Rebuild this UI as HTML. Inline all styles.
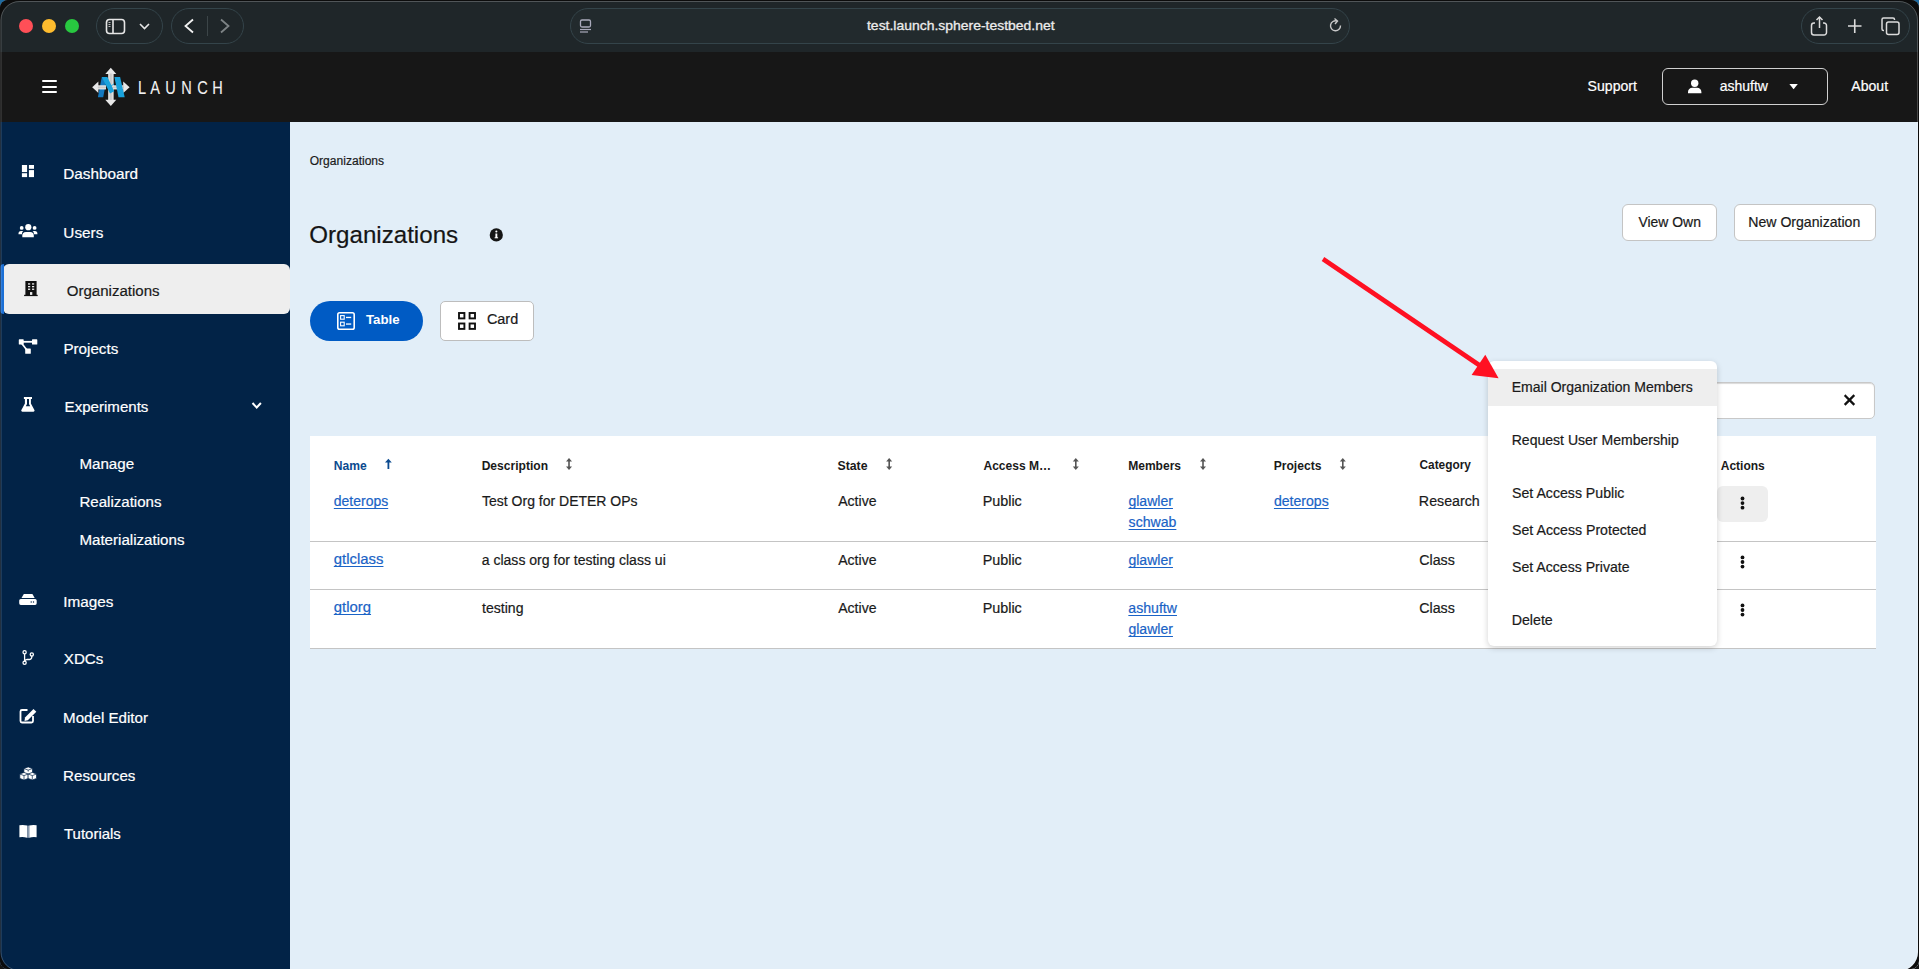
<!DOCTYPE html><html><head><meta charset="utf-8"><style>
*{box-sizing:border-box;margin:0;padding:0}
html,body{width:1919px;height:969px;overflow:hidden;background:linear-gradient(#1d6aa0 0,#1d6aa0 20px,#151515 20px);font-family:"Liberation Sans",sans-serif}
.t{position:absolute;line-height:1;white-space:nowrap;-webkit-text-stroke:0.2px currentColor}
.b{-webkit-text-stroke:0}
.a{position:absolute}
svg{position:absolute;left:0;top:0;overflow:visible}
#win{position:absolute;left:0;top:0;width:1919px;height:969px;border-radius:8px;overflow:hidden;background:#e2eef8}
</style></head><body><div id="win">
<div class="a" style="left:0;top:0;width:1919px;height:52px;background:#1f2629"></div>
<div class="a" style="left:19px;top:19px;width:14px;height:14px;border-radius:50%;background:#ff4f57"></div>
<div class="a" style="left:42px;top:19px;width:14px;height:14px;border-radius:50%;background:#febc2e"></div>
<div class="a" style="left:65px;top:19px;width:14px;height:14px;border-radius:50%;background:#28c840"></div>
<div class="a" style="left:96px;top:8px;width:67px;height:36px;border-radius:18px;border:1px solid #34444a"></div>
<div class="a" style="left:171px;top:8px;width:73px;height:36px;border-radius:18px;border:1px solid #34444a"></div>
<div class="a" style="left:570px;top:8px;width:780px;height:36px;border-radius:18px;border:1px solid #34444a;background:#222a2d"></div>
<div class="a" style="left:1801px;top:8px;width:109px;height:36px;border-radius:18px;border:1px solid #34444a"></div>
<svg width="1919" height="52"><rect x="106.5" y="19.5" width="18" height="14" rx="3" fill="none" stroke="#e6e6e6" stroke-width="1.6"/><line x1="113" y1="19.5" x2="113" y2="33.5" stroke="#e6e6e6" stroke-width="1.6"/><line x1="108.5" y1="22.5" x2="110.5" y2="22.5" stroke="#bbb" stroke-width="1"/><line x1="108.5" y1="24.5" x2="110.5" y2="24.5" stroke="#bbb" stroke-width="1"/><line x1="108.5" y1="26.5" x2="110.5" y2="26.5" stroke="#bbb" stroke-width="1"/><polyline points="140,24 144.5,28.5 149,24" fill="none" stroke="#e6e6e6" stroke-width="1.6"/><polyline points="193,19.5 185.5,26 193,32.5" fill="none" stroke="#f0f0f0" stroke-width="1.8"/><line x1="207.5" y1="16" x2="207.5" y2="36" stroke="#3c4548" stroke-width="1"/><polyline points="221,19.5 228.5,26 221,32.5" fill="none" stroke="#7d8385" stroke-width="1.8"/><rect x="580.5" y="20" width="10" height="7" rx="1.5" fill="none" stroke="#aab" stroke-width="1.3"/><line x1="580" y1="29.5" x2="591" y2="29.5" stroke="#aab" stroke-width="1.2"/><line x1="580" y1="32" x2="588" y2="32" stroke="#aab" stroke-width="1.2"/><path d="M1340.5 25.5 A5 5 0 1 1 1337 21" fill="none" stroke="#c8c8c8" stroke-width="1.4"/><polyline points="1334.5,18.5 1337.5,21 1335,24" fill="none" stroke="#c8c8c8" stroke-width="1.4"/><path d="M1815 23 h-1 a2.5 2.5 0 0 0 -2.5 2.5 v7 a2.5 2.5 0 0 0 2.5 2.5 h10 a2.5 2.5 0 0 0 2.5 -2.5 v-7 a2.5 2.5 0 0 0 -2.5 -2.5 h-1" fill="none" stroke="#dcdcdc" stroke-width="1.5"/><line x1="1819.5" y1="17" x2="1819.5" y2="28" stroke="#dcdcdc" stroke-width="1.5"/><polyline points="1816.5,20 1819.5,17 1822.5,20" fill="none" stroke="#dcdcdc" stroke-width="1.5"/><line x1="1848" y1="26" x2="1861.5" y2="26" stroke="#dcdcdc" stroke-width="1.6"/><line x1="1854.75" y1="19.2" x2="1854.75" y2="33" stroke="#dcdcdc" stroke-width="1.6"/><path d="M1884 30.5 h-0.5 a1.5 1.5 0 0 1 -1.5 -1.5 v-9.5 a1.5 1.5 0 0 1 1.5 -1.5 h9.5 a1.5 1.5 0 0 1 1.5 1.5 v0.5" fill="none" stroke="#dcdcdc" stroke-width="1.5"/><rect x="1886.5" y="22" width="12.5" height="12.5" rx="2" fill="none" stroke="#dcdcdc" stroke-width="1.5"/></svg>
<div class="t" style="left:866.82px;top:19.44px;font-size:13.30px;color:#ececec;font-weight:400;-webkit-text-stroke:0.3px #ececec;transform:scaleX(1.0486);transform-origin:0 0;">test.launch.sphere-testbed.net</div>
<div class="a" style="left:0;top:52px;width:1919px;height:70px;background:#171717"></div>
<div class="a" style="left:42px;top:80px;width:15px;height:2px;background:#fff;border-radius:1px"></div>
<div class="a" style="left:42px;top:85.5px;width:15px;height:2px;background:#fff;border-radius:1px"></div>
<div class="a" style="left:42px;top:91px;width:15px;height:2px;background:#fff;border-radius:1px"></div>
<svg width="300" height="122"><defs><linearGradient id="gs" x1="0" y1="0" x2="0" y2="1"><stop offset="0" stop-color="#f0f0f0"/><stop offset="0.5" stop-color="#c8c8c8"/><stop offset="1" stop-color="#f0f0f0"/></linearGradient><linearGradient id="gv" x1="0" y1="0" x2="1" y2="0"><stop offset="0" stop-color="#f0f0f0"/><stop offset="0.5" stop-color="#c4c4c4"/><stop offset="1" stop-color="#f0f0f0"/></linearGradient></defs><g fill="#e8e8e8"><polygon points="110.8,67.7 116.3,74 105.3,74"/><polygon points="110.8,105.9 116.3,99.7 105.3,99.7"/><polygon points="92.2,87.3 98.4,81.5 98.4,93"/><polygon points="129.6,87.3 123.2,81.5 123.2,93"/></g><rect x="108.2" y="73.5" width="5.4" height="26.5" fill="url(#gv)"/><rect x="110" y="85.3" width="13.5" height="4.1" fill="url(#gs)"/><polygon points="114.4,77 120.1,77 124.7,97.2 118.5,97.2" fill="#19a2dc"/><polygon points="97.9,97.2 103.2,97.2 107,77 101.8,77" fill="#1479c0"/><polygon points="101.8,77 107.4,77 114.2,91.2 110,93.5" fill="#19a2dc"/><rect x="97.8" y="85.3" width="8.2" height="4.1" fill="url(#gs)"/><line x1="111" y1="86" x2="114" y2="84" stroke="#19a2dc" stroke-width="0.9"/></svg>
<div class="t" style="left:136.94px;top:78.59px;font-size:18.20px;color:#f2f2f2;font-weight:400;-webkit-text-stroke:0.1px #f2f2f2;transform:scaleX(0.8);transform-origin:50% 50%;">L</div>
<div class="t" style="left:149.39px;top:78.59px;font-size:18.20px;color:#f2f2f2;font-weight:400;-webkit-text-stroke:0.1px #f2f2f2;transform:scaleX(0.8);transform-origin:50% 50%;">A</div>
<div class="t" style="left:164.40px;top:78.59px;font-size:18.20px;color:#f2f2f2;font-weight:400;-webkit-text-stroke:0.1px #f2f2f2;transform:scaleX(0.8);transform-origin:50% 50%;">U</div>
<div class="t" style="left:180.00px;top:78.59px;font-size:18.20px;color:#f2f2f2;font-weight:400;-webkit-text-stroke:0.1px #f2f2f2;transform:scaleX(0.8);transform-origin:50% 50%;">N</div>
<div class="t" style="left:195.61px;top:78.59px;font-size:18.20px;color:#f2f2f2;font-weight:400;-webkit-text-stroke:0.1px #f2f2f2;transform:scaleX(0.8);transform-origin:50% 50%;">C</div>
<div class="t" style="left:211.00px;top:78.59px;font-size:18.20px;color:#f2f2f2;font-weight:400;-webkit-text-stroke:0.1px #f2f2f2;transform:scaleX(0.8);transform-origin:50% 50%;">H</div>
<div class="t" style="left:1587.60px;top:78.88px;font-size:14.09px;color:#fff;font-weight:400;">Support</div>
<div class="a" style="left:1661.5px;top:68px;width:166px;height:37px;border-radius:6px;border:1px solid #d0d0d0"></div>
<svg width="1919" height="122"><circle cx="1694.7" cy="83.2" r="3.7" fill="#fff"/><path d="M1688 93.3 v-1.3 a4.2 4.2 0 0 1 4.2 -4.2 h5 a4.2 4.2 0 0 1 4.2 4.2 v1.3 z" fill="#fff"/><polygon points="1789.4,84 1797.8,84 1793.6,89.3" fill="#fff"/></svg>
<div class="t" style="left:1719.74px;top:78.96px;font-size:13.99px;color:#fff;font-weight:400;">ashuftw</div>
<div class="t" style="left:1851.30px;top:78.86px;font-size:14.10px;color:#fff;font-weight:400;">About</div>
<div class="a" style="left:0;top:122px;width:290px;height:847px;background:#022347"></div>
<div class="a" style="left:3px;top:264px;width:287px;height:50px;border-radius:6px;background:#eeeeee"></div>
<div class="a" style="left:0px;top:264px;width:4px;height:50px;border-radius:6px 0 0 6px;background:#1a6fd6"></div>
<div class="t" style="left:63.28px;top:166.24px;font-size:15.31px;color:#fff;font-weight:400;">Dashboard</div>
<div class="t" style="left:63.37px;top:225.13px;font-size:15.32px;color:#fff;font-weight:400;">Users</div>
<div class="t" style="left:66.75px;top:283.16px;font-size:15.05px;color:#1a1a1a;font-weight:400;">Organizations</div>
<div class="t" style="left:63.38px;top:340.83px;font-size:15.20px;color:#fff;font-weight:400;">Projects</div>
<div class="t" style="left:64.59px;top:399.02px;font-size:15.09px;color:#fff;font-weight:400;">Experiments</div>
<div class="t" style="left:79.39px;top:456.17px;font-size:15.16px;color:#fff;font-weight:400;">Manage</div>
<div class="t" style="left:79.39px;top:494.13px;font-size:15.08px;color:#fff;font-weight:400;">Realizations</div>
<div class="t" style="left:79.39px;top:531.98px;font-size:15.14px;color:#fff;font-weight:400;">Materializations</div>
<div class="t" style="left:63.22px;top:594.05px;font-size:15.30px;color:#fff;font-weight:400;">Images</div>
<div class="t" style="left:63.85px;top:651.49px;font-size:15.14px;color:#fff;font-weight:400;">XDCs</div>
<div class="t" style="left:63.09px;top:710.00px;font-size:15.13px;color:#fff;font-weight:400;">Model Editor</div>
<div class="t" style="left:63.09px;top:768.09px;font-size:15.13px;color:#fff;font-weight:400;">Resources</div>
<div class="t" style="left:64.00px;top:826.83px;font-size:14.97px;color:#fff;font-weight:400;">Tutorials</div>
<svg width="290" height="969"><g fill="#fff"><rect x="21.9" y="165" width="5.2" height="7.1"/><rect x="21.9" y="173.2" width="5.2" height="3.9"/><rect x="28.9" y="165" width="5.1" height="3.8"/><rect x="28.9" y="170.1" width="5.1" height="7"/></g><g fill="#fff"><circle cx="28.3" cy="227.2" r="3.1"/><circle cx="21.7" cy="227.9" r="1.9"/><circle cx="34.6" cy="227.9" r="1.9"/><path d="M22.3 237.3 v-1.8 a3.6 3.6 0 0 1 3.6 -3.6 h4.3 a3.6 3.6 0 0 1 3.6 3.6 v1.8 z"/><path d="M18.5 234.2 v-0.8 a2.5 2.5 0 0 1 2.5 -2.5 h2.3 a3 3 0 0 0 -1.3 2.5 v0.8 z"/><path d="M37.4 234.2 v-0.8 a2.5 2.5 0 0 0 -2.5 -2.5 h-2.3 a3 3 0 0 1 1.3 2.5 v0.8 z"/></g><g fill="#111"><rect x="25.4" y="281" width="11.2" height="14.2"/><rect x="24.1" y="294.8" width="13.6" height="1.3"/></g><g fill="#eee"><rect x="28" y="283.3" width="2.2" height="1.3"/><rect x="32" y="283.3" width="2.2" height="1.3"/><rect x="28" y="286" width="2.2" height="1.3"/><rect x="32" y="286" width="2.2" height="1.3"/><rect x="28" y="288.6" width="2.2" height="1.3"/><rect x="32" y="288.6" width="2.2" height="1.3"/><rect x="30" y="292.1" width="2.3" height="2.8"/></g><g fill="#fff"><rect x="18.8" y="339.3" width="4.9" height="5.2" rx="0.6"/><rect x="32" y="339.3" width="5.3" height="5.2" rx="0.6"/><rect x="25.2" y="348.5" width="5.6" height="5.3" rx="0.6"/><rect x="23" y="340.9" width="9.5" height="1.8"/></g><line x1="21.8" y1="343.5" x2="26.5" y2="349.5" stroke="#fff" stroke-width="1.7"/><path d="M23.9 397 h8.1 v2 h-1.1 v4.6 l3.5 6.3 a1.2 1.2 0 0 1 -1 1.8 h-11 a1.2 1.2 0 0 1 -1 -1.8 l3.5 -6.3 v-4.6 h-1 z M27 399 v5 l-1.2 2.2 h4.4 l-1.2 -2.2 v-5 z" fill="#fff" fill-rule="evenodd"/><path d="M21.5 598 l2.3 -4 h8.6 l2.3 4 z" fill="#fff"/><path d="M19.2 600.5 a1.6 1.6 0 0 1 1.6 -1.6 h14.3 a1.6 1.6 0 0 1 1.6 1.6 v2.8 a1.6 1.6 0 0 1 -1.6 1.6 h-14.3 a1.6 1.6 0 0 1 -1.6 -1.6 z" fill="#fff"/><circle cx="31.2" cy="602" r="0.7" fill="#022347"/><circle cx="33.5" cy="602" r="0.7" fill="#022347"/><g fill="none" stroke="#fff" stroke-width="1.3"><circle cx="24.6" cy="652.3" r="1.6"/><circle cx="24.6" cy="662.7" r="1.6"/><circle cx="31.8" cy="654.4" r="1.6"/><line x1="24.6" y1="653.9" x2="24.6" y2="661.1"/><path d="M31.8 656 v1 a2.5 2.5 0 0 1 -2.5 2.5 h-2.2 a2.5 2.5 0 0 0 -2.5 2"/></g><path d="M27.5 710 h-5.5 a1.5 1.5 0 0 0 -1.5 1.5 v9.5 a1.5 1.5 0 0 0 1.5 1.5 h9.5 a1.5 1.5 0 0 0 1.5 -1.5 v-5" fill="none" stroke="#fff" stroke-width="1.8"/><path d="M25 717.5 l8.5 -8.5 l2.8 2.8 l-8.5 8.5 l-3.3 0.6 z" fill="#fff"/><g fill="#fff" stroke="#022347" stroke-width="0.7" stroke-linejoin="round"><path d="M28.2 766.9 l4.3 1.6 v4.4 l-4.3 1.6 l-4.3 -1.6 v-4.4 z"/><path d="M24 772.4 l4.2 1.6 v4.4 l-4.2 1.6 l-4.2 -1.6 v-4.4 z"/><path d="M32.3 772.4 l4.2 1.6 v4.4 l-4.2 1.6 l-4.2 -1.6 v-4.4 z"/></g><g stroke="#022347" stroke-width="0.7" fill="none"><path d="M23.9 768.5 l4.3 1.6 l4.3 -1.6 M28.2 770.1 v1.5"/><path d="M19.8 774 l4.2 1.6 l4.2 -1.6 M24 775.6 v4"/><path d="M28.1 774 l4.2 1.6 l4.2 -1.6 M32.3 775.6 v4"/></g><path d="M19.4 825.3 q4 -0.8 7.7 0.3 v12.2 q-3.7 -1.1 -7.7 -0.5 z" fill="#fff"/><path d="M36.6 825.3 q-4 -0.8 -7.4 0.3 v12.2 q3.7 -1.1 7.4 -0.5 z" fill="#fff"/><rect x="27.1" y="825.6" width="2.1" height="12.2" fill="#8a9bb0"/><polyline points="252.5,403 256.7,407.5 260.9,403" fill="none" stroke="#fff" stroke-width="2"/></svg>
<div class="a" style="left:290px;top:122px;width:1629px;height:847px;background:#e2eef8"></div>
<div class="t" style="left:309.70px;top:154.88px;font-size:12.07px;color:#1c1c1c;font-weight:400;">Organizations</div>
<div class="t" style="left:309.29px;top:222.56px;font-size:24.14px;color:#151515;font-weight:400;">Organizations</div>
<svg width="1919" height="969"><circle cx="496.3" cy="234.9" r="6.6" fill="#151515"/><rect x="495.4" y="233.5" width="1.9" height="4.5" fill="#fff"/><circle cx="496.35" cy="231.5" r="1.05" fill="#fff"/><rect x="494.6" y="237.3" width="3.5" height="1" fill="#fff"/></svg>
<div class="a" style="left:310px;top:301px;width:113px;height:40px;border-radius:20px;background:#005bc4"></div>
<div class="a" style="left:439.5px;top:301.4px;width:94px;height:39.3px;border-radius:5px;background:#fff;border:1px solid #bdbdbd"></div>
<svg width="1919" height="969"><rect x="337.8" y="312.8" width="16.4" height="16.4" rx="1.8" fill="none" stroke="#fff" stroke-width="1.6"/><rect x="340.6" y="315.6" width="3.6" height="3.6" fill="none" stroke="#fff" stroke-width="1.1"/><rect x="340.6" y="322.2" width="3.6" height="3.6" fill="none" stroke="#fff" stroke-width="1.1"/><rect x="346" y="316.8" width="5.2" height="1.3" fill="#fff"/><rect x="346" y="323.4" width="5.2" height="1.3" fill="#fff"/><g fill="none" stroke="#111" stroke-width="1.9"><rect x="459" y="313" width="5.4" height="5.4"/><rect x="469.6" y="313" width="5.4" height="5.4"/><rect x="459" y="323.5" width="5.4" height="5.4"/><rect x="469.6" y="323.5" width="5.4" height="5.4"/></g></svg>
<div class="t b" style="left:365.97px;top:313.38px;font-size:13.25px;color:#fff;font-weight:700;">Table</div>
<div class="t" style="left:486.88px;top:312.38px;font-size:14.44px;color:#1a1a1a;font-weight:400;">Card</div>
<div class="a" style="left:1622.3px;top:204.3px;width:94.3px;height:36.4px;border-radius:6px;background:#fff;border:1px solid #c4c4c4"></div>
<div class="a" style="left:1733.5px;top:204.3px;width:142.2px;height:36.4px;border-radius:6px;background:#fff;border:1px solid #c4c4c4"></div>
<div class="t" style="left:1638.46px;top:216.30px;font-size:13.95px;color:#1a1a1a;font-weight:400;">View Own</div>
<div class="t" style="left:1748.27px;top:215.16px;font-size:14.10px;color:#1a1a1a;font-weight:400;">New Organization</div>
<div class="a" style="left:1600px;top:381.8px;width:1275px;height:37.2px;border-radius:5px;background:#fff;border:1px solid #c8c8c8;box-shadow:inset 0 1px 1px rgba(0,0,0,.15);left:1600px;width:275px"></div>
<svg width="1919" height="969"><g stroke="#111" stroke-width="2.3" stroke-linecap="square"><line x1="1845.5" y1="396" x2="1853.5" y2="404"/><line x1="1853.5" y1="396" x2="1845.5" y2="404"/></g></svg>
<div class="a" style="left:310px;top:435.7px;width:1566px;height:213px;background:#fff"></div>
<div class="a" style="left:310px;top:541px;width:1566px;height:1px;background:#c4c4c4"></div>
<div class="a" style="left:310px;top:589px;width:1566px;height:1px;background:#c4c4c4"></div>
<div class="a" style="left:310px;top:648px;width:1566px;height:1px;background:#c4c4c4"></div>
<div class="t b" style="left:333.85px;top:459.76px;font-size:12.10px;color:#0b4a8f;font-weight:700;">Name</div>
<div class="t b" style="left:481.66px;top:459.79px;font-size:12.07px;color:#1a1a1a;font-weight:700;">Description</div>
<div class="t b" style="left:837.53px;top:459.61px;font-size:12.27px;color:#1a1a1a;font-weight:700;">State</div>
<div class="t b" style="left:983.44px;top:459.79px;font-size:12.07px;color:#1a1a1a;font-weight:700;">Access M…</div>
<div class="t b" style="left:1128.16px;top:459.79px;font-size:12.06px;color:#1a1a1a;font-weight:700;">Members</div>
<div class="t b" style="left:1273.65px;top:459.72px;font-size:12.14px;color:#1a1a1a;font-weight:700;">Projects</div>
<div class="t b" style="left:1419.53px;top:459.96px;font-size:11.86px;color:#1a1a1a;font-weight:700;">Category</div>
<div class="t b" style="left:1720.74px;top:459.84px;font-size:12.01px;color:#1a1a1a;font-weight:700;">Actions</div>
<svg width="1919" height="969"><g fill="#555"><rect x="568.2" y="460.5" width="1.6" height="7"/><polygon points="566,461.5 569,458 572,461.5"/><polygon points="566,466.5 569,470 572,466.5"/></g><g fill="#555"><rect x="888.4000000000001" y="460.5" width="1.6" height="7"/><polygon points="886.2,461.5 889.2,458 892.2,461.5"/><polygon points="886.2,466.5 889.2,470 892.2,466.5"/></g><g fill="#555"><rect x="1075.0" y="460.5" width="1.6" height="7"/><polygon points="1072.8,461.5 1075.8,458 1078.8,461.5"/><polygon points="1072.8,466.5 1075.8,470 1078.8,466.5"/></g><g fill="#555"><rect x="1202.2" y="460.5" width="1.6" height="7"/><polygon points="1200,461.5 1203,458 1206,461.5"/><polygon points="1200,466.5 1203,470 1206,466.5"/></g><g fill="#555"><rect x="1342.0" y="460.5" width="1.6" height="7"/><polygon points="1339.8,461.5 1342.8,458 1345.8,461.5"/><polygon points="1339.8,466.5 1342.8,470 1345.8,466.5"/></g><g fill="#0b4a8f"><rect x="387.5" y="461" width="1.8" height="8"/><polygon points="385,462.5 388.4,458.8 391.8,462.5"/></g></svg>
<div class="t" style="left:333.84px;top:494.17px;font-size:13.98px;color:#1a63c6;font-weight:400;text-decoration:underline;text-underline-offset:2px;text-decoration-thickness:1px;text-decoration-skip-ink:none;">deterops</div>
<div class="t" style="left:333.80px;top:552.39px;font-size:14.90px;color:#1a63c6;font-weight:400;text-decoration:underline;text-underline-offset:2px;text-decoration-thickness:1px;text-decoration-skip-ink:none;">gtlclass</div>
<div class="t" style="left:333.80px;top:600.19px;font-size:14.90px;color:#1a63c6;font-weight:400;text-decoration:underline;text-underline-offset:2px;text-decoration-thickness:1px;text-decoration-skip-ink:none;">gtlorg</div>
<div class="t" style="left:482.02px;top:494.15px;font-size:14.00px;color:#1a1a1a;font-weight:400;">Test Org for DETER OPs</div>
<div class="t" style="left:481.74px;top:553.11px;font-size:14.04px;color:#1a1a1a;font-weight:400;">a class org for testing class ui</div>
<div class="t" style="left:482.02px;top:600.87px;font-size:14.09px;color:#1a1a1a;font-weight:400;">testing</div>
<div class="t" style="left:838.20px;top:494.09px;font-size:14.07px;color:#1a1a1a;font-weight:400;">Active</div>
<div class="t" style="left:982.65px;top:493.84px;font-size:14.37px;color:#1a1a1a;font-weight:400;">Public</div>
<div class="t" style="left:838.20px;top:553.09px;font-size:14.07px;color:#1a1a1a;font-weight:400;">Active</div>
<div class="t" style="left:982.65px;top:552.84px;font-size:14.37px;color:#1a1a1a;font-weight:400;">Public</div>
<div class="t" style="left:838.20px;top:600.89px;font-size:14.07px;color:#1a1a1a;font-weight:400;">Active</div>
<div class="t" style="left:982.65px;top:600.64px;font-size:14.37px;color:#1a1a1a;font-weight:400;">Public</div>
<div class="t" style="left:1128.44px;top:494.11px;font-size:14.05px;color:#1a63c6;font-weight:400;text-decoration:underline;text-underline-offset:2px;text-decoration-thickness:1px;text-decoration-skip-ink:none;">glawler</div>
<div class="t" style="left:1128.58px;top:514.57px;font-size:14.10px;color:#1a63c6;font-weight:400;text-decoration:underline;text-underline-offset:2px;text-decoration-thickness:1px;text-decoration-skip-ink:none;">schwab</div>
<div class="t" style="left:1128.44px;top:553.11px;font-size:14.05px;color:#1a63c6;font-weight:400;text-decoration:underline;text-underline-offset:2px;text-decoration-thickness:1px;text-decoration-skip-ink:none;">glawler</div>
<div class="t" style="left:1128.34px;top:600.86px;font-size:14.11px;color:#1a63c6;font-weight:400;text-decoration:underline;text-underline-offset:2px;text-decoration-thickness:1px;text-decoration-skip-ink:none;">ashuftw</div>
<div class="t" style="left:1128.44px;top:622.31px;font-size:14.05px;color:#1a63c6;font-weight:400;text-decoration:underline;text-underline-offset:2px;text-decoration-thickness:1px;text-decoration-skip-ink:none;">glawler</div>
<div class="t" style="left:1273.94px;top:494.08px;font-size:14.08px;color:#1a63c6;font-weight:400;text-decoration:underline;text-underline-offset:2px;text-decoration-thickness:1px;text-decoration-skip-ink:none;">deterops</div>
<div class="t" style="left:1418.86px;top:493.95px;font-size:14.24px;color:#1a1a1a;font-weight:400;">Research</div>
<div class="t" style="left:1419.29px;top:552.95px;font-size:14.23px;color:#1a1a1a;font-weight:400;">Class</div>
<div class="t" style="left:1419.29px;top:600.75px;font-size:14.23px;color:#1a1a1a;font-weight:400;">Class</div>
<div class="a" style="left:1717.4px;top:486.4px;width:50.3px;height:36px;border-radius:6px;background:#eeeeee"></div>
<svg width="1919" height="969"><g fill="#111"><circle cx="1742.5" cy="498.5" r="1.9"/><circle cx="1742.5" cy="503.1" r="1.9"/><circle cx="1742.5" cy="507.70000000000005" r="1.9"/></g><g fill="#111"><circle cx="1742.5" cy="557.4" r="1.9"/><circle cx="1742.5" cy="562" r="1.9"/><circle cx="1742.5" cy="566.6" r="1.9"/></g><g fill="#111"><circle cx="1742.5" cy="605.4" r="1.9"/><circle cx="1742.5" cy="610" r="1.9"/><circle cx="1742.5" cy="614.6" r="1.9"/></g></svg>
<div class="a" style="left:1488.1px;top:360.9px;width:228.7px;height:285.6px;border-radius:6px;background:#fff;box-shadow:0 2px 6px rgba(0,0,0,.18)"></div>
<div class="a" style="left:1488.1px;top:369.1px;width:228.7px;height:36.7px;background:#eeeeee"></div>
<div class="t" style="left:1511.68px;top:380.20px;font-size:14.05px;color:#1a1a1a;font-weight:400;">Email Organization Members</div>
<div class="t" style="left:1511.68px;top:433.00px;font-size:14.06px;color:#1a1a1a;font-weight:400;">Request User Membership</div>
<div class="t" style="left:1512.09px;top:485.83px;font-size:14.14px;color:#1a1a1a;font-weight:400;">Set Access Public</div>
<div class="t" style="left:1512.09px;top:522.72px;font-size:14.15px;color:#1a1a1a;font-weight:400;">Set Access Protected</div>
<div class="t" style="left:1512.09px;top:559.66px;font-size:14.10px;color:#1a1a1a;font-weight:400;">Set Access Private</div>
<div class="t" style="left:1511.66px;top:612.86px;font-size:14.22px;color:#1a1a1a;font-weight:400;">Delete</div>
<svg width="1919" height="969"><line x1="1323" y1="259" x2="1482" y2="367" stroke="#ff1022" stroke-width="4.6"/><polygon points="1498.6,378.3 1485.3,354.8 1471.6,375" fill="#ff1022"/></svg>
<svg width="1919" height="969" style="z-index:50"><path d="M-5 -5 H1925 V975 H-5 Z M19.5 1 H1899 A19 19 0 0 1 1918 20 V952 A19 19 0 0 1 1899 971 H19.5 A19 19 0 0 1 0.5 952 V20 A19 19 0 0 1 19.5 1 Z" fill="#0c0c0c" fill-rule="evenodd"/><path d="M19.5 1.5 H1899 A18.5 18.5 0 0 1 1917.5 20 V952 A18.5 18.5 0 0 1 1899 970.5 H19.5 A18.5 18.5 0 0 1 1 952 V20 A18.5 18.5 0 0 1 19.5 1.5 Z" fill="none" stroke="rgba(255,255,255,0.22)" stroke-width="1"/></svg>
</div></body></html>
